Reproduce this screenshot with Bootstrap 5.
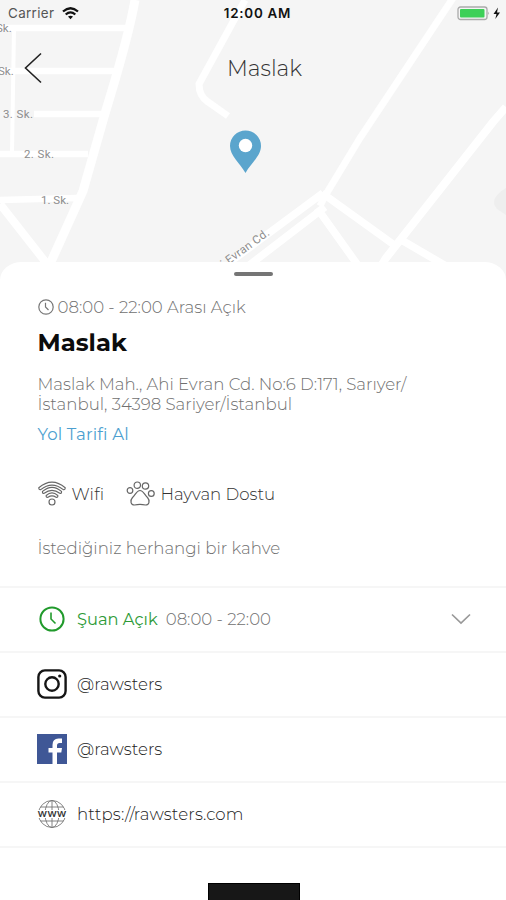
<!DOCTYPE html>
<html lang="tr">
<head>
<meta charset="utf-8">
<meta name="viewport" content="width=device-width, initial-scale=1">
<title>Maslak</title>
<link href="https://cdn.jsdelivr.net/npm/bootstrap@5.3.0/dist/css/bootstrap.min.css" rel="stylesheet">
<style>
body{font-family:Montserrat,Inter,"Liberation Sans",sans-serif;font-size:16.6px;font-weight:300;line-height:20px;color:#333}
.screen{width:506px;height:900px;background:#fff}
.map-area{height:284px;background:#f5f5f5}
.map-bg{inset:0;width:506px;height:284px}
.status{font-family:Inter,"Liberation Sans",sans-serif;height:26px;font-size:13.4px;padding:0 5px 0 8px;color:#555;font-weight:400}
.carrier{letter-spacing:.35px}
.clock-text{font-weight:600;color:#111;font-size:13.4px;letter-spacing:.75px;margin-left:6px}
.side{width:100px}
.top-nav{height:84px;padding:0 24px}
.top-nav .nav-side{width:20px}
.nav-title{font-size:21.8px;line-height:26px;color:#333;margin-left:23px}
.sheet{margin-top:-22px;height:638px;border-radius:22px 22px 0 0/18px 18px 0 0;background:#fff}
.grabber{width:39px;height:4px;border-radius:2px;background:#757575;margin:10px auto 0 234px}
.info{padding:20.500px 38px 0 37.500px;height:309.500px;color:#707070}
.place{font-size:24.3px;line-height:28px;font-weight:700;color:#0c0c0c;margin-top:11px}
.addr{margin-top:18px}
.directions{color:#4c9fd0;margin-top:10px;font-weight:400;letter-spacing:.15px}
.features{margin-top:40px;height:20px;color:#333}
.wifi-label{margin-left:6px;margin-right:22px;letter-spacing:.25px}
.paw-label{margin-left:5px}
.note{margin-top:34px}
.line-item{height:65px;border-top:2px solid #f6f6f6;padding:0 35px 1px 37px;color:#222}
.line-item .ico{width:30px;height:30px;margin-right:10px}
.open-now{color:#2d9a37;font-weight:400;font-size:16.3px}
.open-hours{color:#707070}
.site{letter-spacing:.13px}
.line-end{border-top:2px solid #f6f6f6;height:37px}
.dark-block{width:92px;height:20px;background:#171717;border:1px solid #000;border-bottom:0;margin-left:208px}
</style>
<script src="https://cdn.jsdelivr.net/npm/bootstrap@5.3.0/dist/js/bootstrap.bundle.min.js"></script>
</head>
<body>
<main class="screen position-relative overflow-hidden">
  <header class="map-area position-relative">
    <svg class="map-bg position-absolute" viewBox="0 0 506 284">
      <path d="M506 188Q488 199 497 209L506 215Z" fill="#eee"/>
      <g fill="none" stroke="#fff" stroke-width="7">
        <path d="M135 0C128 40 115 80 104 117L83 191L50 264" stroke-width="9"/>
        <path d="M0 28H126M0 71H114M34 114H101M0 154H88M0 200L77 198" stroke-width="6.500"/>
        <path d="M14 28L12 152" stroke-width="4"/>
        <path d="M0 204L47 264" stroke-width="8"/>
        <path d="M245 0L199 84Q199 96 208 102L228 116"/>
        <path d="M453 -2L360 138L325 196L320 206"/>
        <path d="M506 107L493 122L386 258L381 266" stroke-width="8"/>
        <path d="M230 262L323 193M243 270L325 207M322 193L397 247M317 208L357 264M398 238L446 266" stroke-width="7.500"/>
      </g>
      <g font-family="Roboto,sans-serif" font-size="11.500" font-weight="400" fill="#8d8d8d">
        <text x="-4" y="32">Sk.</text><text x="-2" y="75">Sk.</text>
        <text x="3" y="117.500" textLength="30">3. Sk.</text>
        <text x="24" y="158" textLength="30">2. Sk.</text>
        <text x="41" y="204" textLength="28">1. Sk.</text>
        <text transform="translate(224 268) rotate(-36)" x="0" y="0" textLength="57">i Evran Cd.</text>
      </g>
      <path d="M245.500 173C240 163 230 156 230 146A15.500 15.500 0 0 1 261 146C261 156 251 163 245.500 173Z" fill="#5ba5cd"/>
      <circle cx="245.500" cy="145.500" r="6.700" fill="#fff"/>
    </svg>
    <div class="status position-relative d-flex align-items-center justify-content-between">
      <div class="side d-flex align-items-center gap-2"><span class="carrier">Carrier</span>
        <svg width="17" height="13" viewBox="0 0 17 13" fill="none" stroke="#111" stroke-width="2.300"><path d="M1 4.500Q8.500-2 16 4.500M3.700 7.500Q8.500 3.300 13.300 7.500"/><path d="M6 9.600Q8.500 7.800 11 9.600L8.500 12.300Z" fill="#111" stroke="none"/></svg>
      </div>
      <span class="clock-text">12:00 AM</span>
      <div class="side d-flex align-items-center justify-content-end">
        <svg width="44" height="15" viewBox="0 0 44 15"><rect x="1" y="1" width="29" height="12.500" rx="2.500" fill="#f5f5f5" stroke="#aaa" stroke-width="1.300"/><rect x="3" y="3" width="24.500" height="8.500" rx="1" fill="#3dd058"/><path d="M31.200 5.500Q33 7.200 31.200 9Z" fill="#aaa"/><path d="M41 1.500L36.500 8H39.500L38.300 13L43 6.500H40Z" fill="#111"/></svg>
      </div>
    </div>
    <div class="top-nav position-relative d-flex align-items-center justify-content-between">
      <svg class="nav-side" width="20" height="32" viewBox="0 0 20 32" fill="none" stroke="#222" stroke-width="1.600"><path d="M17 1.500L1.500 16L17 30.500"/></svg>
      <span class="nav-title">Maslak</span><span class="nav-side"></span>
    </div>
  </header>
  <section class="sheet position-relative d-flex flex-column">
    <div class="grabber flex-shrink-0"></div>
    <div class="info flex-shrink-0">
      <div class="hours d-flex align-items-center">
        <svg class="me-1" width="16" height="16" viewBox="0 0 16 16" fill="none" stroke="#777" stroke-width="1.200"><circle cx="8" cy="8" r="7.200"/><path d="M7.500 3.800V8L10.500 11"/></svg>
        <span>08:00 - 22:00 Arası Açık</span>
      </div>
      <h1 class="place mb-0">Maslak</h1>
      <div class="addr">Maslak Mah., Ahi Evran Cd. No:6 D:171, Sarıyer/<br>İstanbul, 34398 Sariyer/İstanbul</div>
      <div class="directions">Yol Tarifi Al</div>
      <div class="features d-flex align-items-center">
        <svg width="28" height="25" viewBox="0 0 28 25" fill="none" stroke="#666" stroke-width="1.150"><path d="M.8 6.800Q14-4.600 27.200 6.800Q27.200 9.200 25.300 8.600Q14-.5 2.700 8.600Q.8 9.200.8 6.800ZM4.500 10.400Q14 2.200 23.500 10.400Q23.800 12.800 21.800 12.300Q14 6.300 6.200 12.300Q4.200 12.800 4.500 10.400ZM8.200 14.500Q14 9.300 19.800 14.500Q20 16.800 18 16.200Q14 13.600 10 16.200Q8 16.800 8.200 14.500Z"/><circle cx="14" cy="21" r="3"/></svg>
        <span class="wifi-label">Wifi</span>
        <svg class="paw" width="29" height="25" viewBox="0 0 29 25" fill="none" stroke="#666" stroke-width="1.200"><circle cx="4" cy="9.500" r="2.800"/><circle cx="11.300" cy="4.200" r="3.200"/><circle cx="19.500" cy="5" r="3.200"/><circle cx="25.300" cy="12.500" r="2.900"/><path d="M14 9.500C17.500 9.500 18.500 14 21.500 16.500C24.500 20 23 24 19.500 24Q14 22.800 8.500 24C5 24 3.500 20 6.500 16.500C9.500 14 10.500 9.500 14 9.500Z"/></svg>
        <span class="paw-label">Hayvan Dostu</span>
      </div>
      <div class="note">İstediğiniz herhangi bir kahve</div>
    </div>
    <div class="line-item d-flex align-items-center flex-shrink-0">
      <svg class="ico" viewBox="0 0 30 30" fill="none" stroke="#219a2c" stroke-width="2"><circle cx="15" cy="15" r="11.600"/><path d="M14 8.500V15L18.500 19.500" stroke-width="1.600"/></svg>
      <span class="open-now">Şuan Açık</span><span class="open-hours ms-2">08:00 - 22:00</span>
      <svg class="ms-auto" width="20" height="12" viewBox="0 0 20 12" fill="none" stroke="#999" stroke-width="1.700"><path d="M1 1.500L10 10L19 1.500"/></svg>
    </div>
    <div class="line-item d-flex align-items-center flex-shrink-0">
      <svg class="ico" viewBox="0 0 30 30" fill="none" stroke="#151515" stroke-width="2.400"><rect x="1.400" y="1.400" width="27.200" height="27.200" rx="6.500"/><circle cx="15" cy="15" r="6.700"/><circle cx="22.700" cy="7" r="1.600" fill="#151515" stroke="none"/></svg>
      <span class="handle">@rawsters</span>
    </div>
    <div class="line-item d-flex align-items-center flex-shrink-0">
      <svg class="ico" viewBox="0 0 30 30"><path d="M0 0H30V30H0Z" fill="#3f5796"/><path d="M15.500 30V18.500H11.500V14H15.500V11Q15.500 4.500 21.500 4.500H25V9H22.500Q20 9 20 11.500V14H25L24.300 18.500H20V30Z" fill="#fff"/></svg>
      <span class="handle">@rawsters</span>
    </div>
    <div class="line-item d-flex align-items-center flex-shrink-0">
      <svg class="ico" viewBox="0 0 30 30" fill="none" stroke="#777" stroke-width=".9"><circle cx="15" cy="15" r="13.500"/><ellipse cx="15" cy="15" rx="7" ry="13.500"/><path d="M15 1.500V28.500M3.500 8H26.500M3.500 22H26.500"/><path d="M0 11H30V19H0Z" fill="#fff" stroke="none"/><text x=".5" y="18" textLength="29" lengthAdjust="spacingAndGlyphs" font-family="Inter,sans-serif" font-size="11" font-weight="500" fill="#333" stroke="none">www</text></svg>
      <span class="site">https://rawsters.com</span>
    </div>
    <div class="line-end flex-shrink-0"></div>
    <div class="dark-block flex-shrink-0"></div>
  </section>
</main>
</body>
</html>
